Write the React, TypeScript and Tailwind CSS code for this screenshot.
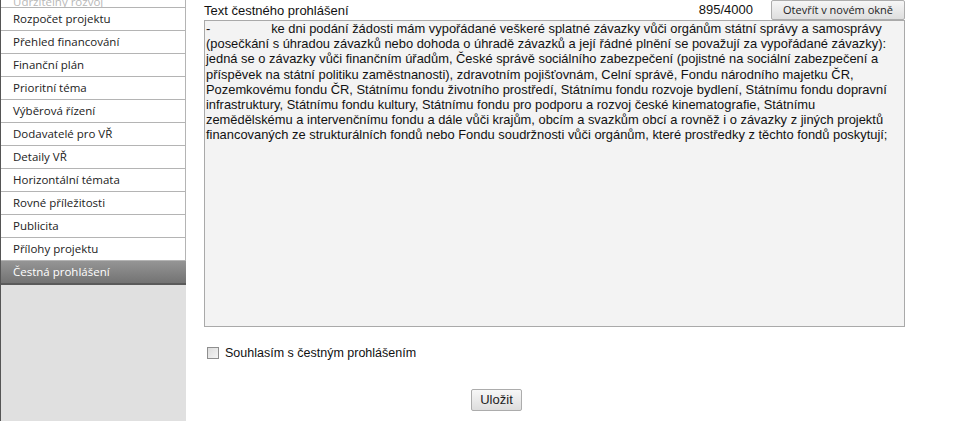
import React from "react";

const menu = [
  "Rozpočet projektu",
  "Přehled financování",
  "Finanční plán",
  "Prioritní téma",
  "Výběrová řízení",
  "Dodavatelé pro VŘ",
  "Detaily VŘ",
  "Horizontální témata",
  "Rovné příležitosti",
  "Publicita",
  "Přílohy projektu",
];

const lines = [
  "-\u00a0\u00a0\u00a0\u00a0\u00a0\u00a0\u00a0\u00a0\u00a0\u00a0\u00a0\u00a0\u00a0\u00a0\u00a0\u00a0\u00a0ke dni podání žádosti mám vypořádané veškeré splatné závazky vůči orgánům státní správy a samosprávy",
  "(posečkání s úhradou závazků nebo dohoda o úhradě závazků a její řádné plnění se považují za vypořádané závazky):",
  "jedná se o závazky vůči finančním úřadům, České správě sociálního zabezpečení (pojistné na sociální zabezpečení a",
  "příspěvek na státní politiku zaměstnanosti), zdravotním pojišťovnám, Celní správě, Fondu národního majetku ČR,",
  "Pozemkovému fondu ČR, Státnímu fondu životního prostředí, Státnímu fondu rozvoje bydlení, Státnímu fondu dopravní",
  "infrastruktury, Státnímu fondu kultury, Státnímu fondu pro podporu a rozvoj české kinematografie, Státnímu",
  "zemědělskému a intervenčnímu fondu a dále vůči krajům, obcím a svazkům obcí a rovněž i o závazky z jiných projektů",
  "financovaných ze strukturálních fondů nebo Fondu soudržnosti vůči orgánům, které prostředky z těchto fondů poskytují;",
];

function Sidebar() {
  return (
    <div className="flex h-[421px] w-[186px] shrink-0 flex-col border-l border-l-[#555] bg-[#e0e0e0] font-['Open_Sans','Noto_Sans',sans-serif] text-[11.5px]">
      <div className="flex h-[8px] items-end overflow-hidden border-b border-r border-[#b4b4b4] bg-white pl-[12px] leading-[16px] text-[#b8b8b8]">
        <span className="mb-[-3px]">Udržitelný rozvoj</span>
      </div>
      {menu.map((item) => (
        <div
          key={item}
          className="flex h-[23px] items-center border-b border-r border-[#b4b4b4] bg-white pl-[12px] text-[#222]"
        >
          {item}
        </div>
      ))}
      <div className="flex h-[24px] items-center border-b-2 border-b-[#5a5a5a] bg-gradient-to-b from-[#959595] to-[#737373] pl-[12px] text-white">
        Čestná prohlášení
      </div>
    </div>
  );
}

export default function App() {
  return (
    <div className="flex h-[421px] w-[964px] overflow-hidden bg-white font-['Liberation_Sans',Arial,sans-serif] text-[#111]">
      <Sidebar />
      <div className="flex w-[720px] flex-col pl-[18px]">
        <div className="flex h-[20px] items-start">
          <div className="mt-[4px] text-[13px] leading-[14px]">Text čestného prohlášení</div>
          <div className="ml-auto mt-[3px] text-[13px] leading-[14px]">895/4000</div>
          <button className="ml-[18px] mr-[1px] h-[20px] w-[134px] rounded-[2px] border border-[#adadad] bg-gradient-to-b from-[#f6f6f6] to-[#dedede] font-['Open_Sans','Noto_Sans',sans-serif] text-[11px] leading-[18px] text-[#222]">
            Otevřít v novém okně
          </button>
        </div>
        <div className="h-[307px] w-[701px] border border-[#a9a9a9] bg-[#f3f3f3] pl-[1px] text-[12.9px] leading-[15.2px] whitespace-nowrap text-[#111]">
          {lines.map((l, i) => (
            <div key={i}>{l}</div>
          ))}
        </div>
        <label className="mt-[18px] flex items-center gap-[6px] pl-[3px] text-[12.5px] leading-[16px]">
          <span className="h-[12px] w-[12px] border border-[#8e8e8e] bg-gradient-to-br from-[#dcdcdc] to-[#f4f4f4]" />
          <span>Souhlasím s čestným prohlášením</span>
        </label>
        <div className="mt-[26px] pl-[267px]">
          <button className="h-[22px] w-[51px] rounded-[2px] border border-[#acacac] bg-gradient-to-b from-[#f7f7f7] to-[#dddddd] text-[13px] leading-[20px] text-[#222]">
            Uložit
          </button>
        </div>
      </div>
    </div>
  );
}
